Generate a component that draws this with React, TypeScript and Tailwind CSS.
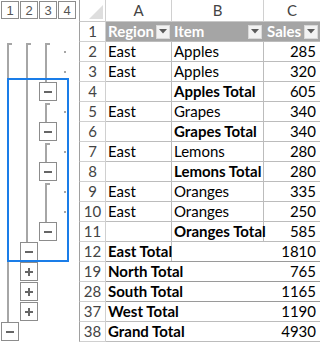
import React from 'react'

type Mark = 'line' | 'corner' | 'dot' | 'minus' | 'plus' | null

type Row = {
    n: number
    a?: string
    b?: string
    c?: string
    bold?: boolean
    wide?: boolean
    dark?: boolean
    marks: Mark[]
}

const rows: Row[] = [
    { n: 2, a: 'East', b: 'Apples', c: '285', marks: ['corner', 'corner', 'corner', 'dot'] },
    { n: 3, a: 'East', b: 'Apples', c: '320', marks: ['line', 'line', 'line', 'dot'] },
    { n: 4, b: 'Apples Total', c: '605', bold: true, marks: ['line', 'line', 'minus', null] },
    { n: 5, a: 'East', b: 'Grapes', c: '340', marks: ['line', 'line', 'corner', 'dot'] },
    { n: 6, b: 'Grapes Total', c: '340', bold: true, marks: ['line', 'line', 'minus', null] },
    { n: 7, a: 'East', b: 'Lemons', c: '280', marks: ['line', 'line', 'corner', 'dot'] },
    { n: 8, b: 'Lemons Total', c: '280', bold: true, marks: ['line', 'line', 'minus', null] },
    { n: 9, a: 'East', b: 'Oranges', c: '335', marks: ['line', 'line', 'corner', 'dot'] },
    { n: 10, a: 'East', b: 'Oranges', c: '250', marks: ['line', 'line', 'line', 'dot'] },
    { n: 11, b: 'Oranges Total', c: '585', bold: true, marks: ['line', 'line', 'minus', null] },
    { n: 12, a: 'East Total', c: '1810', bold: true, dark: true, marks: ['line', 'minus', null, null] },
    { n: 19, a: 'North Total', c: '765', bold: true, wide: true, dark: true, marks: ['line', 'plus', null, null] },
    { n: 28, a: 'South Total', c: '1165', bold: true, wide: true, dark: true, marks: ['line', 'plus', null, null] },
    { n: 37, a: 'West Total', c: '1190', bold: true, wide: true, marks: ['line', 'plus', null, null] },
    { n: 38, a: 'Grand Total', c: '4930', bold: true, wide: true, marks: ['minus', null, null, null] },
]

function Sign({ plus }: { plus?: boolean }) {
    return (
        <svg width="8" height="8" viewBox="0 0 8 8">
            <rect x="0" y="3" width="8" height="2" fill="#666" />
            {plus && <rect x="3" y="0" width="2" height="8" fill="#666" />}
        </svg>
    )
}

function Slot({ mark }: { mark: Mark }) {
    if (mark === 'line') {
        return (
            <div className="w-[19px] h-full pl-[6px]">
                <div className="w-[2px] h-full bg-[#a6a6a6]" />
            </div>
        )
    }
    if (mark === 'corner') {
        return (
            <div className="w-[19px] h-full pl-[6px] pt-[1px]">
                <div className="w-[5px] h-[19px] border-l-2 border-t-2 border-[#a6a6a6]" />
            </div>
        )
    }
    if (mark === 'dot') {
        return (
            <div className="w-[19px] h-full pl-[6px] flex items-center">
                <div className="w-[2px] h-[2px] bg-[#a6a6a6]" />
            </div>
        )
    }
    if (mark === 'minus' || mark === 'plus') {
        return (
            <div className="w-[19px] h-full">
                <div className="w-[18px] h-[19px] border border-[#8c8c8c] bg-white flex items-center justify-center">
                    <Sign plus={mark === 'plus'} />
                </div>
            </div>
        )
    }
    return <div className="w-[19px] h-full" />
}

function Arrow() {
    return (
        <div className="w-[14px] h-[14px] bg-[#f2f2f2] border border-[#d9d9d9] flex items-center justify-center">
            <svg width="8" height="5" viewBox="0 0 8 5">
                <path d="M0 0 H8 L4 4.5 Z" fill="#5a5a5a" />
            </svg>
        </div>
    )
}

export default function App() {
    return (
        <div className="w-[320px] h-[342px] bg-white overflow-hidden relative font-['Lato',sans-serif] text-[15px] text-black leading-none">
            {/* column letters + outline level buttons */}
            <div className="flex h-[22px]">
                <div className="w-[79px] shrink-0 flex gap-[1px] pl-[1px] pt-[1px]">
                    {[1, 2, 3, 4].map((l) => (
                        <div key={l} className="w-[18px] h-[18px] border border-[#8c8c8c] flex items-center justify-center font-['Liberation_Sans',sans-serif] text-[13px] text-[#555]">
                            {l}
                        </div>
                    ))}
                </div>
                <div className="w-[27px] shrink-0 border-l border-r border-b border-l-[#a0a0a0] border-r-[#d0d0d0] border-b-[#c8c8c8] flex items-end justify-end p-[2px]">
                    <svg width="14" height="14" viewBox="0 0 14 14">
                        <path d="M14 0 V14 H0 Z" fill="#dedede" />
                    </svg>
                </div>
                <div className="w-[66px] shrink-0 border-r border-b border-[#d0d0d0] border-b-[#c8c8c8] flex items-center justify-center text-[#444]">A</div>
                <div className="w-[92px] shrink-0 border-r border-b border-[#d0d0d0] border-b-[#c8c8c8] flex items-center justify-center text-[#444]">B</div>
                <div className="flex-1 border-b border-[#c8c8c8] flex items-center justify-center text-[#444]">C</div>
            </div>

            {/* table header row */}
            <div className="flex h-[20px]">
                <div className="w-[79px] shrink-0" />
                <div className="w-[27px] shrink-0 border-l border-r border-b border-l-[#a0a0a0] border-[#d0d0d0] flex items-center justify-center text-[#444]">1</div>
                <div className="flex-1 flex bg-[#a5a5a5] border-b border-[#bcbcbc] text-white font-bold">
                    <div className="w-[66px] shrink-0 flex items-center justify-between pl-[2px] pr-[2px]">
                        <span>Region</span>
                        <Arrow />
                    </div>
                    <div className="w-[92px] shrink-0 flex items-center justify-between pl-[2px] pr-[2px]">
                        <span>Item</span>
                        <Arrow />
                    </div>
                    <div className="flex-1 flex items-center justify-between pl-[3px] pr-[2px]">
                        <span>Sales</span>
                        <Arrow />
                    </div>
                </div>
            </div>

            {rows.map((r) => (
                <div key={r.n} className="flex h-[20px]">
                    <div className="w-[79px] shrink-0 flex pl-[1px]">
                        {r.marks.map((m, i) => (
                            <Slot key={i} mark={m} />
                        ))}
                    </div>
                    <div className="w-[27px] shrink-0 border-l border-r border-b border-l-[#a0a0a0] border-[#d0d0d0] flex items-center justify-center text-[#444]">
                        {r.n}
                    </div>
                    <div className={`flex-1 flex border-b ${r.dark ? 'border-[#9a9a9a]' : 'border-[#bcbcbc]'}`}>
                        {r.wide ? (
                            <div className="w-[158px] shrink-0 flex items-center pl-[2px] whitespace-nowrap font-bold">{r.a}</div>
                        ) : (
                            <>
                                <div className={`w-[66px] shrink-0 border-r border-[#bcbcbc] flex items-center pl-[2px] whitespace-nowrap ${r.bold ? 'font-bold' : ''}`}>{r.a}</div>
                                <div className={`w-[92px] shrink-0 flex items-center pl-[2px] whitespace-nowrap ${r.bold ? 'font-bold' : ''} ${r.n === 12 ? '' : 'border-r border-[#bcbcbc]'}`}>{r.b}</div>
                            </>
                        )}
                        <div className="flex-1 flex items-center justify-end pr-[4px]">{r.c}</div>
                    </div>
                </div>
            ))}

            {/* selected outline group */}
            <div className="absolute left-[7px] top-[78px] w-[62px] h-[184px] border-2 border-[#1a7de8]" />
        </div>
    )
}
